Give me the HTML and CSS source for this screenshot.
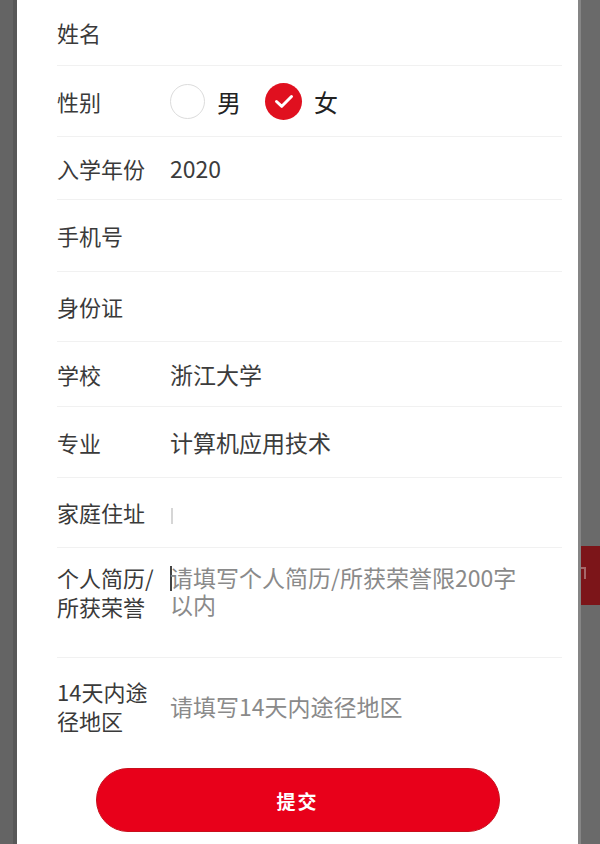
FILE: index.html
```html
<!DOCTYPE html>
<html lang="zh-CN">
<head>
<meta charset="utf-8">
<title>报名表</title>
<link rel="stylesheet" href="styles.css">
</head>
<body>
<div class="page">
  <div class="side side-left"></div>
  <main class="panel">
    <div class="row r1"><span class="label">姓名</span><span class="value"></span></div>
    <div class="row r2">
      <span class="label">性别</span>
      <div class="value radios">
        <span class="radio"><span class="circle"></span><span class="rtext">男</span></span>
        <span class="radio checked"><span class="circle"><svg viewBox="0 0 36 36" width="36" height="36"><path d="M10.5 18.5 L15.8 23.3 L25.5 13.5" fill="none" stroke="#fff" stroke-width="3" stroke-linecap="round" stroke-linejoin="round"/></svg></span><span class="rtext">女</span></span>
      </div>
    </div>
    <div class="row r3"><span class="label">入学年份</span><span class="value">2020</span></div>
    <div class="row r4"><span class="label">手机号</span><span class="value"></span></div>
    <div class="row r5"><span class="label">身份证</span><span class="value"></span></div>
    <div class="row r6"><span class="label">学校</span><span class="value">浙江大学</span></div>
    <div class="row r7"><span class="label">专业</span><span class="value">计算机应用技术</span></div>
    <div class="row r8"><span class="label">家庭住址</span><span class="value"><span class="faint-caret"></span></span></div>
    <div class="row r9 top"><span class="label">个人简历/所获荣誉</span><span class="value placeholder area"><span class="caret"></span>请填写个人简历/所获荣誉限200字以内</span></div>
    <div class="row r10 last"><span class="label">14天内途径地区</span><span class="value placeholder">请填写14天内途径地区</span></div>
    <div class="actions"><button class="submit" type="button">提交</button></div>
  </main>
  <div class="side side-right"><div class="behind-btn"><span class="glyph-bit"></span></div></div>
</div>
</body>
</html>
```

FILE: styles.css
```css
* { box-sizing: border-box; }
html, body { margin: 0; padding: 0; }
body {
  width: 600px;
  height: 844px;
  overflow: hidden;
  background: #676767;
  font-family: "Noto Sans CJK SC", "Noto Sans", "Liberation Sans", sans-serif;
  color: #333;
}
.page {
  display: flex;
  height: 844px;
}
.side-left {
  width: 17px;
  background: #646464;
  border-right: 4px solid #585858;
}
.panel {
  width: 561px;
  background: #fff;
  padding: 0 16px 0 40px;
  display: flex;
  flex-direction: column;
}
.side-right {
  width: 22px;
  background: #6a6a6a;
  border-left: 3px solid #858585;
  padding-top: 546px;
}
.behind-btn {
  height: 59px;
  background: #7c1519;
  display: flex;
  align-items: center;
}
.glyph-bit {
  display: block;
  width: 5px;
  height: 12px;
  margin-top: -6px;
  border-right: 2px solid #b88a8c;
  border-top: 2px solid #b88a8c;
  opacity: 0.7;
}
.row {
  display: flex;
  align-items: center;
  border-bottom: 1px solid #f1f1f1;
}
.row.last { border-bottom: none; }
.row.top { align-items: flex-start; padding-top: 15px; }
.r1 { height: 66px; }
.r2 { height: 71px; }
.r3 { height: 63px; }
.r4 { height: 72px; }
.r5 { height: 70px; }
.r6 { height: 65px; }
.r7 { height: 71px; }
.r8 { height: 70px; }
.r9 { height: 110px; }
.r10 { height: 96px; }
.label {
  width: 113px;
  padding-right: 13px;
  flex-shrink: 0;
  color: #3a3a3a;
  font-size: 22px;
  line-height: 29px;
}
.value {
  flex: 1;
  color: #3c3c3c;
  font-size: 23px;
  line-height: 29px;
}
.placeholder { color: #8a8a8a; }
.area {
  flex: 0 0 auto;
  width: 356px;
  line-height: 27px;
  margin-top: 1px;
}
.caret {
  display: inline-block;
  width: 2px;
  height: 25px;
  background: #444;
  vertical-align: -4px;
  margin-right: -2px;
}
.faint-caret {
  display: inline-block;
  width: 2px;
  height: 16px;
  background: #d6d6d6;
  vertical-align: middle;
  margin-left: 1px;
}
.radios {
  display: flex;
  align-items: center;
  gap: 24px;
}
.radio {
  display: flex;
  align-items: center;
  gap: 12px;
}
.circle {
  width: 35px;
  height: 35px;
  border-radius: 50%;
  border: 1px solid #dcdcdc;
  display: flex;
  align-items: center;
  justify-content: center;
}
.checked .circle {
  width: 37px;
  height: 37px;
  border: none;
  background: #e0101f;
}
.rtext {
  font-size: 24px;
  color: #222;
}
.actions {
  display: flex;
  justify-content: center;
  padding-top: 14px;
  margin-left: -24px;
}
.submit {
  width: 404px;
  height: 64px;
  border-radius: 32px;
  border: 1px solid #c8101c;
  background: #e8001a;
  color: #fff;
  font-family: "Noto Sans CJK SC", sans-serif;
  font-size: 19px;
  font-weight: 700;
  letter-spacing: 2px;
}
```
